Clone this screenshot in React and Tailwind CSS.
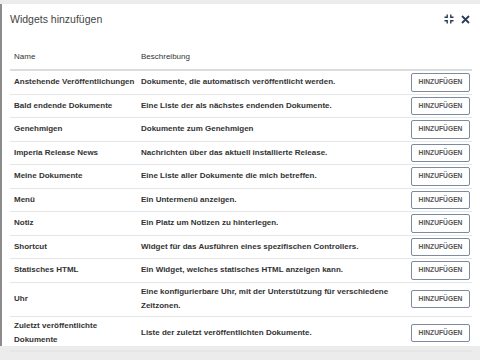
import React from "react";

const widgets = [
  ["Anstehende Veröffentlichungen", "Dokumente, die automatisch veröffentlicht werden."],
  ["Bald endende Dokumente", "Eine Liste der als nächstes endenden Dokumente."],
  ["Genehmigen", "Dokumente zum Genehmigen"],
  ["Imperia Release News", "Nachrichten über das aktuell installierte Release."],
  ["Meine Dokumente", "Eine Liste aller Dokumente die mich betreffen."],
  ["Menü", "Ein Untermenü anzeigen."],
  ["Notiz", "Ein Platz um Notizen zu hinterlegen."],
  ["Shortcut", "Widget für das Ausführen eines spezifischen Controllers."],
  ["Statisches HTML", "Ein Widget, welches statisches HTML anzeigen kann."],
  ["Uhr", "Eine konfigurierbare Uhr, mit der Unterstützung für verschiedene Zeitzonen."],
  ["Zuletzt veröffentlichte Dokumente", "Liste der zuletzt veröffentlichten Dokumente."],
];

const CompressIcon = () => (
  <svg width="10" height="10" viewBox="0 0 10 10" fill="none" stroke="#2b3d55" strokeWidth="1.4">
    <path d="M0.5 3.2 H3.2 V0.5" />
    <path d="M9.5 3.2 H6.8 V0.5" />
    <path d="M0.5 6.8 H3.2 V9.5" />
    <path d="M9.5 6.8 H6.8 V9.5" />
  </svg>
);

const CloseIcon = () => (
  <svg width="9" height="9" viewBox="0 0 9 9" fill="none" stroke="#2b3d55" strokeWidth="1.8">
    <path d="M1 1 L8 8 M8 1 L1 8" />
  </svg>
);

export default function App() {
  return (
    <div
      className="h-[360px] w-[480px] overflow-hidden bg-[#ececec] pt-[4px]"
      style={{ fontFamily: '"Liberation Sans", Arial, sans-serif' }}
    >
      <div className="h-[342px] border-l-2 border-[#8c8c8c] bg-white">
        <div className="flex items-center justify-between pl-[8px] pr-[10px] pt-[8px]">
          <h2 className="text-[10.5px] leading-[14px] text-[#444]">Widgets hinzufügen</h2>
          <div className="flex items-center gap-[7px]">
            <CompressIcon />
            <CloseIcon />
          </div>
        </div>

        <table className="ml-[8px] mt-[20px] w-[462px] table-fixed border-collapse text-[8px] text-[#333]">
          <colgroup>
            <col className="w-[127px]" />
            <col />
            <col className="w-[64px]" />
          </colgroup>
          <thead>
            <tr className="border-b-2 border-[#dcdcdc]">
              <th className="pl-[4px] pr-0 pb-[5px] pt-[4px] text-left font-normal leading-[14px]">Name</th>
              <th className="px-[4px] pb-[5px] pt-[4px] text-left font-normal leading-[14px]">Beschreibung</th>
              <th></th>
            </tr>
          </thead>
          <tbody>
            {widgets.map(([name, desc], i) => (
              <tr
                key={name}
                className={i === widgets.length - 1 ? "border-b-2 border-[#e6e6e6]" : "border-b border-[#e6e6e6]"}
              >
                <td className="pl-[4px] pr-0 py-[2px] align-middle font-bold leading-[14.5px]">{name}</td>
                <td className="px-[4px] py-[2px] align-middle font-bold leading-[14.5px]">{desc}</td>
                <td className="py-[2px] pr-[2px] text-right align-middle">
                  <button className="h-[18.5px] w-[59px] rounded-[2px] border border-[#7d8ba0] bg-white text-[6.7px] font-bold text-[#555]">
                    HINZUFÜGEN
                  </button>
                </td>
              </tr>
            ))}
          </tbody>
        </table>
      </div>
    </div>
  );
}
